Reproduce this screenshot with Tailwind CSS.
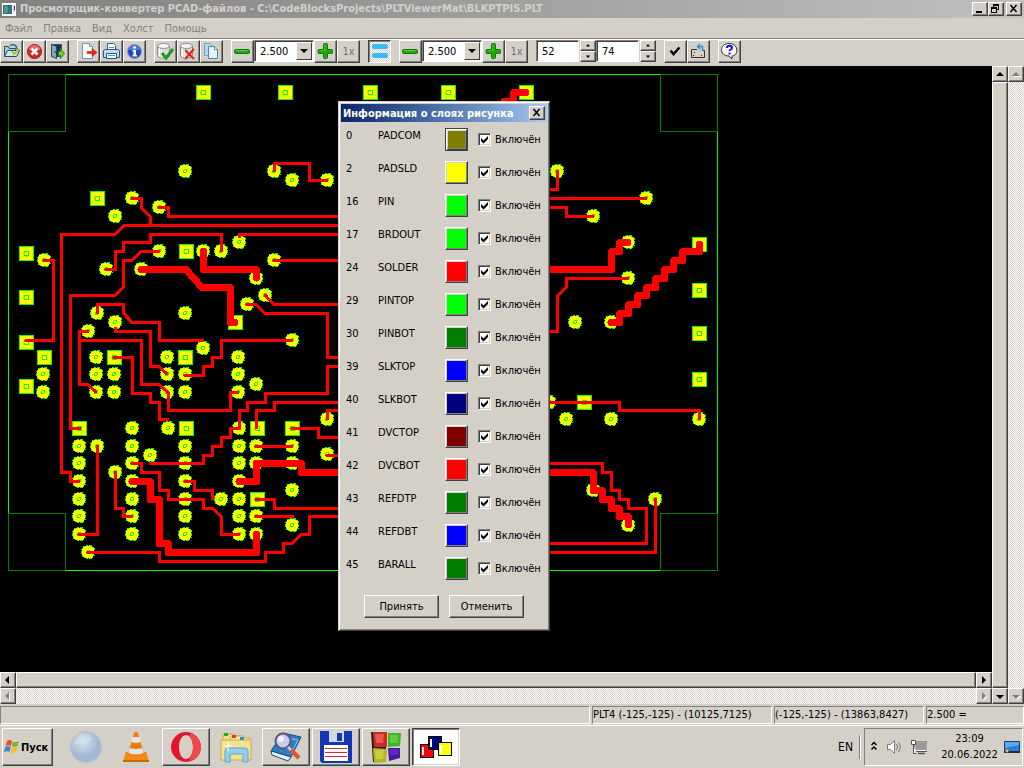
<!DOCTYPE html>
<html lang="ru">
<head>
<meta charset="utf-8">
<title>Просмотрщик-конвертер PCAD-файлов</title>
<script src="https://cdn.jsdelivr.net/npm/@tailwindcss/browser@4"></script>
</head>
<body class="flex h-screen flex-col overflow-hidden bg-[#d4d0c8] font-['DejaVu_Sans_Condensed','DejaVu_Sans',sans-serif] text-[11px] leading-[13px] text-black">

<svg class="hidden">
  <defs>
    <symbol id="minus" viewBox="0 0 19 19"><rect x="1.500" y="7.500" width="15" height="4" rx="1.500" fill="#22a80c" stroke="#0c7a04"/><path d="M3 8.500h11" stroke="#5ccf3a"/></symbol>
    <symbol id="plus" viewBox="0 0 19 19"><path d="M7.500 2.500q0-1 1-1h2q1 0 1 1v5h4q1 0 1 1v2q0 1-1 1h-4v4q0 1-1 1h-2q-1 0-1-1v-4h-4.500q-1 0-1-1v-2q0-1 1-1h4.500z" fill="#22a80c" stroke="#0c7a04"/><path d="M9 3v5.500H4" fill="none" stroke="#4cc82c"/></symbol>
    <symbol id="db" viewBox="0 0 19 19"><path d="M1.500 4v9.500c0 3.500 12 3.500 12 0V4" fill="#dcdcdc" stroke="#8c8c8c"/><path d="M3.500 6v9M5.500 7v9" stroke="#fff"/><ellipse cx="7.500" cy="4" rx="6" ry="2.500" fill="#f4f4f4" stroke="#8c8c8c"/></symbol>
  </defs>
</svg>

<header class="flex h-[18px] shrink-0 items-center bg-linear-to-r from-[#808080] to-[#c0c0c0] px-0.5 text-[#d4d0c8]">
  <svg class="mr-1 size-[14px]" viewBox="0 0 14 14"><path d="M0 1h14v13H0z" fill="#fff"/><path d="M1 3h9v9H1z" fill="#2f6f86"/><path d="M2 4h4v7H2z" fill="#4f9a74"/><path d="M11 3h2v8h-2z" fill="#d0d8de"/><path d="M12 4h1v4h-1z" fill="#333"/></svg>
  <h1 class="flex-1 truncate text-[11px] leading-[18px] font-bold">Просмотрщик-конвертер PCAD-файлов - C:\CodeBlocksProjects\PLTViewerMat\BLKPTPIS.PLT</h1>
  <button aria-label="Свернуть" class="h-[14px] w-4 border border-t-white border-r-[#404040] border-b-[#404040] border-l-white bg-[#d4d0c8] shadow-[inset_-1px_-1px_#808080]"><svg class="h-3 w-[14px]" viewBox="0 0 14 12"><path d="M3 8h6v2H3z"/></svg></button>
  <button aria-label="Восстановить" class="h-[14px] w-4 border border-t-white border-r-[#404040] border-b-[#404040] border-l-white bg-[#d4d0c8] shadow-[inset_-1px_-1px_#808080]"><svg class="h-3 w-[14px]" viewBox="0 0 14 12" fill="none" stroke="#000" shape-rendering="crispEdges"><path d="M4.500 4V1.500h5v5H8M4 2.500h6M2.500 4.500h5v5h-5zM2 5.500h6"/></svg></button>
  <button aria-label="Закрыть" class="ml-0.5 h-[14px] w-4 border border-t-white border-r-[#404040] border-b-[#404040] border-l-white bg-[#d4d0c8] shadow-[inset_-1px_-1px_#808080]"><svg class="h-3 w-[14px]" viewBox="0 0 14 12" stroke="#000" stroke-width="1.500"><path d="M3.500 2l6 7M9.500 2l-6 7"/></svg></button>
</header>

<nav class="flex h-5 shrink-0 items-center gap-[11px] px-[5px] text-[#808080]">
  <button>Файл</button><button>Правка</button><button>Вид</button><button>Холст</button><button>Помощь</button>
</nav>

<div class="flex h-7 shrink-0 items-start gap-2 border-t border-[#808080] shadow-[inset_0_1px_#fff] pt-px" role="toolbar" id="bar">
  <div class="flex">
    <button aria-label="Открыть" class="size-[23px] border border-t-white border-r-[#404040] border-b-[#404040] border-l-white p-px shadow-[inset_-1px_-1px_#808080]"><svg class="size-[19px]" viewBox="0 0 19 19"><path d="M2.500 14.500v-10h4l1 2h6v3" fill="#a9c9dc" stroke="#1f4f6e"/><path d="M2.500 14.500l3-6h12l-3 6z" fill="#d3e6f1" stroke="#1f4f6e"/><path d="M8 3.500c4-2 7 0 7 4" fill="none" stroke="#2d6f9a" stroke-width="1.500"/><path d="M10 9.500l2 2.500 5-5" fill="none" stroke="#9ad01c" stroke-width="2"/></svg></button>
    <button aria-label="Закрыть файл" class="size-[23px] border border-t-white border-r-[#404040] border-b-[#404040] border-l-white p-px shadow-[inset_-1px_-1px_#808080]"><svg class="size-[19px]" viewBox="0 0 19 19"><circle cx="9.500" cy="9.500" r="7" fill="#d02a2a" stroke="#9b1515"/><path d="M3.500 8a6 5 0 0 1 12 0z" fill="#e46a6a"/><path d="M6.500 6.500l6 6M12.500 6.500l-6 6" stroke="#fff" stroke-width="2.500"/></svg></button>
    <button aria-label="Выход" class="size-[23px] border border-t-white border-r-[#404040] border-b-[#404040] border-l-white p-px shadow-[inset_-1px_-1px_#808080]"><svg class="size-[19px]" viewBox="0 0 19 19"><path d="M3.500 2.500h10v12h-10z" fill="#16324a" stroke="#31536d"/><path d="M3.500 2.500l5 2v12l-5-2z" fill="#7fa9c4" stroke="#28495f"/><circle cx="7" cy="10" r=".8" fill="#123"/><path d="M10.500 9.500h2v-3l4 5-4 5v-3h-2z" fill="#6fcb3a" stroke="#2d8a12"/></svg></button>
  </div>
  <div class="flex">
    <button aria-label="Экспорт" class="size-[23px] border border-t-white border-r-[#404040] border-b-[#404040] border-l-white p-px shadow-[inset_-1px_-1px_#808080]"><svg class="size-[19px]" viewBox="0 0 19 19"><path d="M3.500 1.500h7l3 3v12h-10z" fill="#f8fafd" stroke="#7c93b4"/><path d="M10.500 1.500v3h3" fill="#d8e2ef" stroke="#7c93b4"/><path d="M8 9.500h5v-3l5 4-5 4v-3H8z" fill="#e42a1a" stroke="#b31409" stroke-width=".5"/></svg></button>
    <button aria-label="Печать" class="size-[23px] border border-t-white border-r-[#404040] border-b-[#404040] border-l-white p-px shadow-[inset_-1px_-1px_#808080]"><svg class="size-[19px]" viewBox="0 0 19 19"><path d="M5.500 8.500v-7h6l2 2v5" fill="#fff" stroke="#2d6394"/><path d="M1.500 8.500l2-1h12l2 1v7h-16z" fill="#c5def1" stroke="#1f5688"/><path d="M4.500 11.500h10v5h-10z" fill="#fff" stroke="#1f5688"/><path d="M6 13.500h7M7 5.500h5" stroke="#4d9ad0"/><path d="M15 10.500h1" stroke="#3b3"/></svg></button>
    <button aria-label="Информация" class="size-[23px] border border-t-white border-r-[#404040] border-b-[#404040] border-l-white p-px shadow-[inset_-1px_-1px_#808080]"><svg class="size-[19px]" viewBox="0 0 19 19"><circle cx="9.500" cy="9.500" r="7" fill="#1e46c8" stroke="#8d9bc0"/><path d="M3.500 8a6 5 0 0 1 12 0z" fill="#4f76e0"/><path d="M8 4.500h3v2H8zM7.500 8H11v5h1v1.500H7.500V13h1V9.500h-1z" fill="#fff"/></svg></button>
  </div>
  <div class="flex">
    <button aria-label="Применить слои" class="size-[23px] border border-t-white border-r-[#404040] border-b-[#404040] border-l-white p-px shadow-[inset_-1px_-1px_#808080]"><svg class="size-[19px]" viewBox="0 0 19 19"><use href="#db"/><path d="M6 11l4 5 7-9" fill="none" stroke="#1e9a1e" stroke-width="3"/></svg></button>
    <button aria-label="Удалить слои" class="size-[23px] border border-t-white border-r-[#404040] border-b-[#404040] border-l-white p-px shadow-[inset_-1px_-1px_#808080]"><svg class="size-[19px]" viewBox="0 0 19 19"><use href="#db"/><path d="M6 8l9 9M15 7l-9 10" stroke="#e02414" stroke-width="2"/></svg></button>
    <button aria-label="Копировать" class="size-[23px] border border-t-white border-r-[#404040] border-b-[#404040] border-l-white p-px shadow-[inset_-1px_-1px_#808080]"><svg class="size-[19px]" viewBox="0 0 19 19"><path d="M2.500 1.500h6l2 2v10h-8z" fill="#b4d9ef" stroke="#6fa3c6"/><path d="M6.500 4.500h6l3 3v9h-9z" fill="#e4f3fb" stroke="#4d86ae"/><path d="M12.500 4.500v3h3" fill="#fff" stroke="#4d86ae"/></svg></button>
  </div>
  <div class="flex">
    <button aria-label="Уменьшить по X" class="size-[23px] border border-t-white border-r-[#404040] border-b-[#404040] border-l-white p-px shadow-[inset_-1px_-1px_#808080]"><svg class="size-[19px]"><use href="#minus"/></svg></button>
    <div class="relative h-[22px] w-[60px] border border-t-[#808080] border-r-white border-b-white border-l-[#808080] bg-white shadow-[inset_1px_1px_#404040]">
      <select aria-label="Масштаб по X" class="h-5 w-full appearance-none bg-transparent pl-[5px]"><option>2.500</option></select>
      <svg class="pointer-events-none absolute top-px right-px h-[18px] w-4 border border-t-white border-r-[#404040] border-b-[#404040] border-l-white bg-[#d4d0c8]" viewBox="0 0 14 16"><path d="M3 6h8l-4 4z"/></svg>
    </div>
    <button aria-label="Увеличить по X" class="size-[23px] border border-t-white border-r-[#404040] border-b-[#404040] border-l-white p-px shadow-[inset_-1px_-1px_#808080]"><svg class="size-[19px]"><use href="#plus"/></svg></button>
    <button class="size-[23px] border border-t-white border-r-[#404040] border-b-[#404040] border-l-white text-[#707070] shadow-[inset_-1px_-1px_#808080]">1x</button>
  </div>
  <button aria-label="Равный масштаб" aria-pressed="true" class="size-[23px] border border-t-[#404040] border-r-white border-b-white border-l-[#404040] bg-[repeating-conic-gradient(#fff_0_25%,#d4d0c8_0_50%)] bg-[length:2px_2px] p-px shadow-[inset_1px_1px_#808080]"><svg class="size-[19px]" viewBox="0 0 19 19" fill="#3cb9fb"><rect x="2" y="2" width="16" height="5" rx="2"/><rect x="2" y="11" width="16" height="5" rx="2"/></svg></button>
  <div class="flex">
    <button aria-label="Уменьшить по Y" class="size-[23px] border border-t-white border-r-[#404040] border-b-[#404040] border-l-white p-px shadow-[inset_-1px_-1px_#808080]"><svg class="size-[19px]"><use href="#minus"/></svg></button>
    <div class="relative h-[22px] w-[60px] border border-t-[#808080] border-r-white border-b-white border-l-[#808080] bg-white shadow-[inset_1px_1px_#404040]">
      <select aria-label="Масштаб по Y" class="h-5 w-full appearance-none bg-transparent pl-[5px]"><option>2.500</option></select>
      <svg class="pointer-events-none absolute top-px right-px h-[18px] w-4 border border-t-white border-r-[#404040] border-b-[#404040] border-l-white bg-[#d4d0c8]" viewBox="0 0 14 16"><path d="M3 6h8l-4 4z"/></svg>
    </div>
    <button aria-label="Увеличить по Y" class="size-[23px] border border-t-white border-r-[#404040] border-b-[#404040] border-l-white p-px shadow-[inset_-1px_-1px_#808080]"><svg class="size-[19px]"><use href="#plus"/></svg></button>
    <button class="size-[23px] border border-t-white border-r-[#404040] border-b-[#404040] border-l-white text-[#707070] shadow-[inset_-1px_-1px_#808080]">1x</button>
  </div>
  <div class="flex">
    <input aria-label="Смещение X" value="52" class="h-[22px] w-[43px] border border-t-[#808080] border-r-white border-b-white border-l-[#808080] bg-white pl-[5px] shadow-[inset_1px_1px_#404040]">
    <div class="ml-px flex w-4 flex-col">
      <button aria-label="X больше" class="h-[11px] border border-t-white border-r-[#404040] border-b-[#404040] border-l-white shadow-[inset_-1px_-1px_#808080]"><svg class="h-[9px] w-[14px]" viewBox="0 0 14 9"><path d="M7 3l2 2.500H5z"/></svg></button>
      <button aria-label="X меньше" class="h-[11px] border border-t-white border-r-[#404040] border-b-[#404040] border-l-white shadow-[inset_-1px_-1px_#808080]"><svg class="h-[9px] w-[14px]" viewBox="0 0 14 9"><path d="M7 6l2-2.500H5z"/></svg></button>
    </div>
    <input aria-label="Смещение Y" value="74" class="h-[22px] w-[43px] border border-t-[#808080] border-r-white border-b-white border-l-[#808080] bg-white pl-[5px] shadow-[inset_1px_1px_#404040]">
    <div class="ml-px flex w-4 flex-col">
      <button aria-label="Y больше" class="h-[11px] border border-t-white border-r-[#404040] border-b-[#404040] border-l-white shadow-[inset_-1px_-1px_#808080]"><svg class="h-[9px] w-[14px]" viewBox="0 0 14 9"><path d="M7 3l2 2.500H5z"/></svg></button>
      <button aria-label="Y меньше" class="h-[11px] border border-t-white border-r-[#404040] border-b-[#404040] border-l-white shadow-[inset_-1px_-1px_#808080]"><svg class="h-[9px] w-[14px]" viewBox="0 0 14 9"><path d="M7 6l2-2.500H5z"/></svg></button>
    </div>
  </div>
  <div class="flex">
    <button aria-label="Применить" class="size-[23px] border border-t-white border-r-[#404040] border-b-[#404040] border-l-white p-px shadow-[inset_-1px_-1px_#808080]"><svg class="size-[19px]" viewBox="0 0 19 19"><path d="M4.500 8.500l3 3.500L13.500 5.500" fill="none" stroke="#000" stroke-width="2.500"/></svg></button>
    <button aria-label="Повернуть" class="size-[23px] border border-t-white border-r-[#404040] border-b-[#404040] border-l-white p-px shadow-[inset_-1px_-1px_#808080]"><svg class="size-[19px]" viewBox="0 0 19 19" fill="none"><path d="M8 7.500H2.500v8h13v-7H14" stroke="#333"/><path d="M4 13.500h1M12 13.500h1M5 10.500h1" stroke="#333"/><path d="M13.500 9V4.500h-4M11 2L8.500 4.500 11 7" stroke="#2b8fd0" stroke-width="1.500"/></svg></button>
  </div>
  <button aria-label="Справка" class="size-[23px] border border-t-white border-r-[#404040] border-b-[#404040] border-l-white p-px shadow-[inset_-1px_-1px_#808080]"><svg class="size-[19px]" viewBox="0 0 19 19"><path d="M9 1.500c10 0 10 12 3 12.500v3L9 14c-10 0-10-12.500 0-12.500z" fill="#fff" stroke="#333"/><path d="M7 6c0-3 5-3 5 0 0 1.500-2.500 1.500-2.500 3M9.500 10.500v2" fill="none" stroke="#1010e0" stroke-width="2"/></svg></button>
</div>

<main class="flex min-h-0 flex-1">
  <div class="flex min-w-0 flex-1 flex-col">
    <section class="relative min-h-0 flex-1 overflow-hidden bg-black">
      <svg class="block h-[606px] w-[992px]" viewBox="0 66 992 606" fill="none" shape-rendering="crispEdges" role="img" aria-label="Печатная плата">
        <defs>
          <marker id="rp" markerUnits="userSpaceOnUse" markerWidth="16" markerHeight="16" refX="8" refY="8" viewBox="0 0 16 16">
            <path d="M5.500 1h5l2 1 1.500 1.500 1 2v5l-1 2-1.500 1.500-2 1h-5l-2-1L2 12.500l-1-2v-5l1-2L3.500 2z" fill="#0f0"/>
            <path d="M5.500 2h5L13 3.500l1 2v5L12.500 13l-2 1h-5L3 12.500l-1-2v-5L3.500 3z" fill="#ff0"/>
            <path d="M5 1h1v1H5zM8 1h1v1H8zM5 14h1v1H5zM8 14h1v1H8zM1 6h1v1H1zM1 10h1v1H1zM14 6h1v1h-1zM14 10h1v1h-1zM2 3h1v1H2zM13 12h1v1h-1zM3 13h1v1H3zM12 2h1v1h-1z" fill="#000"/>
            <circle cx="8" cy="8" r="1.500" stroke="#0f0"/>
          </marker>
          <marker id="sp" markerUnits="userSpaceOnUse" markerWidth="16" markerHeight="16" refX="8" refY="8" viewBox="0 0 16 16">
            <rect x="1" y="1" width="14" height="14" fill="#ff0" stroke="#0f0"/><circle cx="8" cy="8" r="2.500" stroke="#0f0"/>
          </marker>
        </defs>
        <path d="M8.500 74.500h709v496h-709z" stroke="#0f0"/>
        <path d="M8.500 74.500h57v57h-57zM660.500 74.500h57v57h-57zM8.500 513.500h57v57h-57zM660.500 513.500h57v57h-57z" stroke="#008000"/>
        <polyline marker-start="url(#sp)" marker-mid="url(#sp)" marker-end="url(#sp)" points="97.500,198.500 26.500,253.500 26.500,297.500 203.500,92.500 285.500,92.500 370.500,92.500 448.500,92.500 526.500,92.500 186.500,251.500 235.500,322.500 26.500,342.500 44.500,357.500 26.500,386.500 114.500,357.500 79.500,428.500 185.500,357.500 186.500,428.500 257.500,428.500 292.500,428.500 257.500,499.500 699.500,244.500 699.500,290.500 699.500,333.500 699.500,379.500 584.500,402.500"/>
        <polyline marker-start="url(#rp)" marker-mid="url(#rp)" marker-end="url(#rp)" points="132,198 115,216 159,207 44,260 159,251 106,269 141,269 97,313 115,322 88,331 185,171 274,171 292,180 327,180 239,242 203,251 221,251 274,260 256,278 265,295 247,304 185,313 43,374 43,392 96,357 96,374 96,392 114,374 114,392 79,446 79,463 79,481 79,499 79,516 79,534 97,446 132,428 132,446 132,463 132,481 132,499 132,516 132,534 150,455 115,472 88,552 167,357 167,374 167,392 168,428 203,348 292,340 238,357 238,374 238,392 185,374 185,392 256,384 239,428 239,446 239,463 239,481 239,499 239,516 239,534 185,446 185,463 185,481 185,499 185,516 185,534 256,446 256,463 292,446 292,463 292,490 221,499 256,516 256,534 292,525 327,419 327,454 557,171 646,198 593,216 628,242 628,278 575,322 611,322 549,402 566,419 611,419 699,419 593,490 655,499 628,525"/>
        <g stroke="#f00" stroke-width="3" stroke-linejoin="round" stroke-linecap="round">
          <path d="M132 198.500H141.500V208L150.500 217V225M159 207.500H168.500V216.500H340M79 481.500H70.500V472.500H61.500V234.500H115L124 225.500H340M106 269.500H115.500V251.500H123.500V242.500H150.500V234.500H221.500V251M159 251.500H141L132 260.500H123.500V287L115 295.500H70.500V428.500H80M44 260.500H53.500V340.500H26"/>
          <path d="M97.500 313V304.500H123.500V313L132 322.500H159.500V340.500H203M115.500 328V331.500H150.500V366.500H159L167 374M88 331.500H79.500V384.500H88L96 392M79.500 340.500H141.500V384.500H159L168.500 393V410.500H230.500V392.500H238M114 357.500H132.500V393.500H150.500V402.500H159.500V419.500H168M97.500 446V534.500H79"/>
          <path d="M150.500 463.500H203.500V455.500H212.500V446.500H221.500V437.500H230.500V428.500H239.500V410.500H247.500V402.500H265.500V393.500H327.500V366.500H340M115.500 472V508.500H123.500V516.500H132M132 463.500H141.500V472.500H159.500V490.500H168.500V499.500H203.500V508.500H213L221.500 517V534.500H239M88 552.500H159.500V561.500H265.500V552.500H283.500V543.500H292L301 534.500H309.500V516.500H340"/>
          <path d="M274.500 171V163.500H309.500V180.500H327M239.500 237V234.500H340M274 260.500H340M265 295L274 304.500H340M247 304.500H256L265 313.500H327.500V357.500H340M292 340.500H221.500V357.500H212.500V366.500H203.500V375.500H185M256.500 428V410.500H274.500V402.500H340M292 428.500H318.500V437.500H340M327.500 419V410.500H340M327 455.500H340M256 446.500H292M256 499.500H274.500V508.500H340M256 516.500H293M185 481.500H194.500V490.500H212.500V499"/>
          <path d="M557.500 171V189.500H545M545 198.500H646M545 207.500H566.500V216.500H593M628 278.500H566.500V287L557.500 296V331.500H545M545 402.500H619.500V410.500H699.500V419M545 463.500H602.500V472.500H611.500V490.500H619.500V499.500H628.500V508.500H646.500V543.500H545M655.500 499V552.500H545"/>
        </g>
        <g stroke="#f00" stroke-width="7" stroke-linejoin="round" stroke-linecap="round">
          <path d="M141 269.500H186L202 287.500H230.500V322.500H235M203.500 251V269.500H256.500V278M132 481.500H150.500V499.500H159.500V543.500H168.500V552.500H256.500V534M239 481.500H256.500V463.500H301.500V472.500H340M526 92.500H513.500V101.500H504"/>
          <path d="M545 269.500H611.500V251.500H619.500V242.500H628M611 322.500H619.500V313.500H628.500V304.500H637.500V295.500H646.500V287.500H655.500V278.500H664.500V269.500H673.500V260.500H682.500V251.500H699.500V244M545 472.500H593.500V490.500H602.500V499.500H611.500V508.500H619.500V516.500H628.500V525"/>
        </g>
      </svg>

      <div role="dialog" aria-labelledby="dlg" class="absolute top-[35px] left-[338px] w-[212px] border border-t-[#d4d0c8] border-r-[#404040] border-b-[#404040] border-l-[#d4d0c8] bg-[#d4d0c8] p-0.5 shadow-[inset_1px_1px_#fff,inset_-1px_-1px_#808080]">
        <div class="flex h-[18px] items-center bg-linear-to-r from-[#0a246a] to-[#a6caf0] pr-0.5 pl-0.5">
          <h2 id="dlg" class="flex-1 text-[11px] font-bold whitespace-nowrap text-white">Информация о слоях рисунка</h2>
          <button aria-label="Закрыть окно" class="h-[14px] w-4 border border-t-white border-r-[#404040] border-b-[#404040] border-l-white bg-[#d4d0c8] shadow-[inset_-1px_-1px_#808080]"><svg class="h-3 w-[14px]" viewBox="0 0 14 12" stroke="#000" stroke-width="1.500"><path d="M3.500 2l6 7M9.500 2l-6 7"/></svg></button>
        </div>
        <div id="rows" class="pt-[5px]"></div>
        <div class="flex justify-center gap-2.5 pt-1.5 pb-2.5">
          <button class="h-[23px] w-[75px] border border-t-white border-r-[#404040] border-b-[#404040] border-l-white shadow-[inset_-1px_-1px_#808080]">Принять</button>
          <button class="h-[23px] w-[75px] border border-t-white border-r-[#404040] border-b-[#404040] border-l-white shadow-[inset_-1px_-1px_#808080]">Отменить</button>
        </div>
      </div>
    </section>

    <div class="flex h-4 shrink-0">
      <button aria-label="Влево" class="w-4 border border-t-white border-r-[#404040] border-b-[#404040] border-l-white shadow-[inset_-1px_-1px_#808080]"><svg class="size-[14px]" viewBox="0 0 14 14"><path d="M8 3v8L4 7z"/></svg></button>
      <div class="flex-1 border border-t-white border-r-[#404040] border-b-[#404040] border-l-white shadow-[inset_-1px_-1px_#808080]"></div>
      <button aria-label="Вправо" class="w-4 border border-t-white border-r-[#404040] border-b-[#404040] border-l-white shadow-[inset_-1px_-1px_#808080]"><svg class="size-[14px]" viewBox="0 0 14 14"><path d="M5 3v8l4-4z"/></svg></button>
    </div>
    <div class="flex h-4 shrink-0">
      <button disabled aria-label="Влево" class="w-4 border border-t-white border-r-[#404040] border-b-[#404040] border-l-white shadow-[inset_-1px_-1px_#808080]"><svg class="size-[14px]" viewBox="0 0 14 14"><path d="M9 4v8L5 8z" fill="#fff"/><path d="M8 3v8L4 7z" fill="#808080"/></svg></button>
      <div class="flex-1 bg-[repeating-conic-gradient(#fff_0_25%,#d4d0c8_0_50%)] bg-[length:2px_2px]"></div>
      <button disabled aria-label="Вправо" class="w-4 border border-t-white border-r-[#404040] border-b-[#404040] border-l-white shadow-[inset_-1px_-1px_#808080]"><svg class="size-[14px]" viewBox="0 0 14 14"><path d="M6 4v8l4-4z" fill="#fff"/><path d="M5 3v8l4-4z" fill="#808080"/></svg></button>
    </div>
  </div>
  <div class="flex w-4 shrink-0 flex-col">
    <button aria-label="Вверх" class="h-4 border border-t-white border-r-[#404040] border-b-[#404040] border-l-white shadow-[inset_-1px_-1px_#808080]"><svg class="size-[14px]" viewBox="0 0 14 14"><path d="M3 9h8L7 5z"/></svg></button>
    <div class="flex-1 border border-t-white border-r-[#404040] border-b-[#404040] border-l-white shadow-[inset_-1px_-1px_#808080]"></div>
    <button aria-label="Вниз" class="h-4 border border-t-white border-r-[#404040] border-b-[#404040] border-l-white shadow-[inset_-1px_-1px_#808080]"><svg class="size-[14px]" viewBox="0 0 14 14"><path d="M3 6h8l-4 4z"/></svg></button>
  </div>
  <div class="flex w-4 shrink-0 flex-col">
    <button disabled aria-label="Вверх" class="h-4 border border-t-white border-r-[#404040] border-b-[#404040] border-l-white shadow-[inset_-1px_-1px_#808080]"><svg class="size-[14px]" viewBox="0 0 14 14"><path d="M4 10h8L8 6z" fill="#fff"/><path d="M3 9h8L7 5z" fill="#808080"/></svg></button>
    <div class="flex-1 bg-[repeating-conic-gradient(#fff_0_25%,#d4d0c8_0_50%)] bg-[length:2px_2px]"></div>
    <button disabled aria-label="Вниз" class="h-4 border border-t-white border-r-[#404040] border-b-[#404040] border-l-white shadow-[inset_-1px_-1px_#808080]"><svg class="size-[14px]" viewBox="0 0 14 14"><path d="M4 7h8l-4 4z" fill="#fff"/><path d="M3 6h8l-4 4z" fill="#808080"/></svg></button>
  </div>
</main>

<div class="flex h-5 shrink-0 gap-0.5 pt-0.5 leading-4 whitespace-nowrap" role="status">
  <div class="flex-1 border border-t-[#808080] border-r-white border-b-white border-l-[#808080]"></div>
  <div class="w-[180px] border border-t-[#808080] border-r-white border-b-white border-l-[#808080]">PLT4 (-125,-125) - (10125,7125)</div>
  <div class="w-[150px] border border-t-[#808080] border-r-white border-b-white border-l-[#808080]">(-125,-125) - (13863,8427)</div>
  <div class="w-[98px] border border-t-[#808080] border-r-white border-b-white border-l-[#808080]">2.500 =</div>
</div>

<footer class="flex h-11 shrink-0 items-center gap-0.5 border-t border-[#d4d0c8] pt-px pl-0.5 shadow-[inset_0_1px_#fff]">
  <button class="mr-[7px] flex h-[38px] w-[51px] items-center gap-px border border-t-white border-r-[#404040] border-b-[#404040] border-l-white pl-px text-[11px] font-bold shadow-[inset_-1px_-1px_#808080]">
    <svg class="size-4 shrink-0" viewBox="0 0 16 16"><path d="M3 2q3-2 5 0L7 7Q4 5.500 1.500 7z" fill="#e8502a"/><path d="M9 2.500q3 1.500 6-.5l-1.500 5Q11 9 8 7.500z" fill="#7ab82e"/><path d="M1.200 8q3-1.500 5.500 0L5.500 13Q3 11.500 0 13z" fill="#3f7fd8"/><path d="M7.700 8.500q3 1.500 5.500-.5L12 13q-3 2-5.500.5z" fill="#f6bd28"/></svg>Пуск</button>
  <button aria-label="Браузер" class="flex h-[38px] w-12 items-center justify-center"><svg class="size-8" viewBox="0 0 32 32"><defs><radialGradient id="g" cx=".4" cy=".3"><stop stop-color="#d9e4f1"/><stop offset="1" stop-color="#a3b7d6"/></radialGradient></defs><circle cx="16" cy="16" r="15.500" fill="url(#g)" stroke="#b5bfd2"/><path d="M5 13q6-6 10-4t5-3" stroke="#d3dfec" stroke-width="2" fill="none"/></svg></button>
  <button aria-label="VLC" class="flex h-[38px] w-12 items-center justify-center"><svg class="size-8" viewBox="0 0 32 32"><path d="M6 21h20l3 9q0 1-1 1H4q-1 0-1-1z" fill="#f28a14"/><path d="M3 29h26v2H3z" fill="#c96a08"/><path d="M14 2q2-2 4 0l6 21q-8 4-16 0z" fill="#f07c10"/><path d="M12.500 6h7l1.400 5q-5 1.500-9.800 0zM9.800 17q6 2 12.400 0l1.400 5q-7.600 3-15.200 0z" fill="#e2e6e8"/></svg></button>
  <button aria-label="Opera" class="flex h-[38px] w-12 items-center justify-center border border-t-white border-r-[#404040] border-b-[#404040] border-l-white shadow-[inset_-1px_-1px_#808080]"><svg class="size-8" viewBox="0 0 32 32"><path fill-rule="evenodd" d="M16 1a15 15 0 1 0 0 30a15 15 0 1 0 0-30zM16 4c4 0 7 5 7 12s-3 12-7 12-7-5-7-12 3-12 7-12z" fill="#e3142c"/><path d="M21 2q9 4 10 14-1 10-10 14l-2-3q4-4 4-11t-4-11z" fill="#f04a4f"/></svg></button>
  <button aria-label="Проводник" class="flex h-[38px] w-12 items-center justify-center"><svg class="size-8" viewBox="0 0 32 32"><path d="M3 3h11l1 2h6v22H3z" fill="#f0dc8c" stroke="#c8ac50"/><path d="M11 5h13l1 2h5v20H9z" fill="#f6e8a4" stroke="#c8ac50"/><path d="M1 9h30v20H1z" fill="#f4e08e" stroke="#c8ac50"/><path d="M4 2h4v3H4z" fill="#18b428"/><path d="M12 4h4v3h-4z" fill="#e03a20"/><path d="M20 6h4v3h-4z" fill="#2890e0"/><path d="M5 31V20q0-3 3-3h17q3 0 3 3v11h-5v-8H10v8z" fill="#93d0ee" stroke="#5aa8d0"/><path d="M8 11v9M4 15h9" stroke="#fff"/></svg></button>
  <button aria-label="Поиск" class="flex h-[38px] w-12 items-center justify-center border border-t-white border-r-[#404040] border-b-[#404040] border-l-white shadow-[inset_-1px_-1px_#808080]"><svg class="size-8" viewBox="0 0 32 32"><path d="M13 2l18 4-10 20L1 20z" fill="#2f7cc4" stroke="#154a80"/><path d="M1 20l1 4 16 6 3-4z" fill="#e8f0f8" stroke="#154a80"/><path d="M22 8l6 1-7 14" fill="none" stroke="#8cc4ee"/><circle cx="13" cy="10" r="7.500" fill="#c9cdf0" stroke="#5a5a78" stroke-width="2"/><circle cx="11" cy="8" r="3" fill="#f2f3ff"/><path d="M18 16l4 4" stroke="#ccc" stroke-width="3"/><path d="M21 19l8 8" stroke="#e0562a" stroke-width="4.500"/></svg></button>
  <button aria-label="Сохранение" class="flex h-[38px] w-12 items-center justify-center border border-t-white border-r-[#404040] border-b-[#404040] border-l-white shadow-[inset_-1px_-1px_#808080]"><svg class="size-8" viewBox="0 0 32 32"><path d="M0 0h32v32H2l-2-2z" fill="#1238b8"/><path d="M9 0h15v11H9z" fill="#d4d8e0"/><path d="M17 2h5v8h-5z" fill="#1238b8"/><path d="M4 14h24v16H4z" fill="#fff"/><path d="M5 17.500h22M5 21.500h22M5 25.500h22" stroke="#d8283c"/></svg></button>
  <button aria-label="CodeBlocks" class="flex h-[38px] w-12 items-center justify-center border border-t-white border-r-[#404040] border-b-[#404040] border-l-white shadow-[inset_-1px_-1px_#808080]"><svg class="size-8" viewBox="0 0 32 32"><path d="M1 1l15 1v28L3 31z" fill="#222"/><path d="M3 1h14v15H4z" fill="#d02820"/><path d="M5 3h9l-1 9H6z" fill="#e4584e"/><path d="M18 2h13l-1 13-12 1z" fill="#40b428"/><path d="M20 4h8v8h-8z" fill="#58d040"/><path d="M3 17l14 1-1 13-12 1z" fill="#b4b420"/><path d="M5 19h9l-1 9H6z" fill="#cccc40"/><path d="M18 17h12v10l-11 3z" fill="#4818a0"/><path d="M20 18h8v6h-8z" fill="#5c28c0"/></svg></button>
  <button aria-label="Просмотрщик PLT" class="flex h-[38px] w-12 items-center justify-center border border-t-[#404040] border-r-white border-b-white border-l-[#404040] bg-white shadow-[inset_1px_1px_#808080,inset_-1px_-1px_#d4d0c8]"><svg class="size-8" viewBox="0 0 32 32" stroke="#000" shape-rendering="crispEdges"><path d="M.5 13.500h13v13H.5z" fill="#f00"/><path d="M8.500 5.500h13v13h-13z" fill="#000080"/><path d="M18.500 11.500h13v13h-13z" fill="#ff0"/><path d="M3 16v8M11 8v8M21 14v8" stroke="#fff" stroke-width="2"/></svg></button>
  <span class="ml-auto text-[12px]">EN</span>
  <div class="mr-px ml-1 h-6 w-0.5 border-l border-[#808080] bg-white"></div>
  <div class="mr-px flex h-[38px] w-[159px] items-center border border-t-[#808080] border-r-white border-b-white border-l-[#808080] pl-[5px]">
    <button aria-label="Показать скрытые значки" class="mr-2"><svg class="h-4 w-2" viewBox="0 0 8 16" fill="none" stroke="#000" stroke-width="1.500"><path d="M1.500 6L4 3.500 6.500 6M1.500 10.500L4 8l2.500 2.500"/></svg></button>
    <button aria-label="Громкость"><svg class="size-4" viewBox="0 0 16 16" fill="none" stroke="#777"><path d="M1.500 5.500h3l4-4v13l-4-4h-3z" fill="#fff"/><path d="M10.500 5q2 3 0 6M12.500 3q3.500 5 0 10"/></svg></button>
    <button aria-label="Сеть" class="ml-[9px]"><svg class="size-4" viewBox="0 0 16 16"><path d="M4.500 3.500h11v8h-11z" fill="#999" stroke="#fff"/><path d="M4 3h12v9.500H4z" fill="none" stroke="#555"/><path d="M7 14.500h7" stroke="#555" stroke-width="1.500"/><path d="M.5 1.500h4v4h-4zM2.500 6v8.500h3" fill="#fff" stroke="#555"/></svg></button>
    <div class="flex-1 pl-2 text-center leading-4 whitespace-nowrap"><div>23:09</div><div>20.06.2022</div></div>
    <button aria-label="Рабочий стол" class="mr-0.5"><svg class="size-4" viewBox="0 0 16 16"><path d="M.5 2.500h15v10H.5z" fill="#2a7fd8" stroke="#123f78"/><path d="M1 3h14v3L1 9z" fill="#5aa8ee"/><path d="M0 12h16v2H0z" fill="#1b2c40"/><circle cx="3" cy="12" r="1.500" fill="#f4c430"/></svg></button>
  </div>
</footer>

<template id="row">
  <div class="flex h-[33px] items-start pl-[5px]">
    <span class="w-8 pt-0.5"></span>
    <span class="w-[67px] pt-0.5"></span>
    <button class="mt-px size-[23px] border border-t-white border-r-[#404040] border-b-[#404040] border-l-white shadow-[inset_-1px_-1px_#808080,inset_1px_1px_#d4d0c8]"></button>
    <label class="mt-1.5 ml-2.5 flex items-center gap-1">
      <input type="checkbox" checked class="peer size-[13px] appearance-none border border-t-[#808080] border-r-white border-b-white border-l-[#808080] bg-white shadow-[inset_1px_1px_#404040,inset_-1px_-1px_#d4d0c8]">
      <svg class="pointer-events-none invisible -ml-[17px] size-[13px] peer-checked:visible" viewBox="0 0 13 13"><path d="M3 5l2.500 2.500L10 3v3l-4.500 4.500L3 8z"/></svg>
      <span>Включён</span>
    </label>
  </div>
</template>
<script>
const layers = [
  [0, 'PADCOM', '#808000'], [2, 'PADSLD', '#ffff00'], [16, 'PIN', '#00ff00'], [17, 'BRDOUT', '#00ff00'],
  [24, 'SOLDER', '#ff0000'], [29, 'PINTOP', '#00ff00'], [30, 'PINBOT', '#008000'], [39, 'SLKTOP', '#0000ff'],
  [40, 'SLKBOT', '#000080'], [41, 'DVCTOP', '#800000'], [42, 'DVCBOT', '#ff0000'], [43, 'REFDTP', '#008000'],
  [44, 'REFDBT', '#0000ff'], [45, 'BARALL', '#008000']
];
for (const [num, name, color] of layers) {
  const row = document.getElementById('row').content.cloneNode(true);
  const spans = row.querySelectorAll('span');
  spans[0].textContent = num;
  spans[1].textContent = name;
  const swatch = row.querySelector('button');
  swatch.style.backgroundColor = color;
  swatch.setAttribute('aria-label', 'Цвет ' + name);
  if (num === 0) swatch.className = 'mt-px size-[23px] border border-[#404040] shadow-[inset_1px_1px_#fff,inset_-1px_-1px_#404040,inset_2px_2px_#d4d0c8,inset_-2px_-2px_#808080]';
  document.getElementById('rows').append(row);
}
</script>
</body>
</html>
